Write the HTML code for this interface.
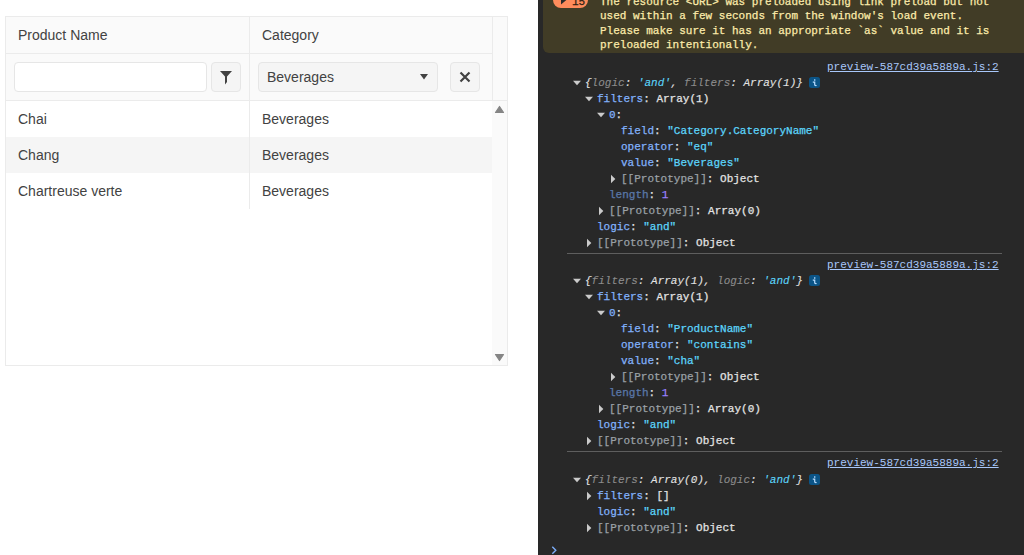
<!DOCTYPE html>
<html><head><meta charset="utf-8">
<style>
*{box-sizing:border-box;margin:0;padding:0}
html,body{width:1024px;height:555px;overflow:hidden;background:#fff}
body{position:relative;font-family:"Liberation Sans",sans-serif}
.abs{position:absolute}
/* grid */
#grid{position:absolute;left:5px;top:16px;width:503px;height:350px;border:1px solid #ebebeb;background:#fff}
.hdr{position:absolute;left:0;top:0;width:501px;height:84px;background:#fafafa}
.hline{position:absolute;height:1px;background:#ebebeb}
.vline{position:absolute;width:1px;background:#ebebeb}
.txt{position:absolute;font-size:14px;color:#424242;white-space:nowrap;line-height:16px}
.inp{position:absolute;background:#fff;border:1px solid #e6e6e6;border-radius:4px}
.btn{position:absolute;background:#f5f5f5;border:1px solid #e6e6e6;border-radius:4px}
/* console */
#con{position:absolute;left:538px;top:0;width:486px;height:555px;background:#282828;font-family:"Liberation Mono",monospace;font-size:11px}
#warn{position:absolute;left:5px;top:-10px;width:481px;height:63px;background:#413c26;border-radius:0 0 0 6px}
.wl{position:absolute;left:62px;color:#fcebaa;-webkit-text-stroke:0.25px currentColor;white-space:pre;line-height:14px}
.cl{position:absolute;white-space:pre;line-height:16px;color:#e3e3e3;-webkit-text-stroke:0.25px}
.tri{position:absolute;width:0;height:0}
.td{border-left:4px solid transparent;border-right:4px solid transparent;border-top:5px solid #c4c4c4}
.tr{border-top:4px solid transparent;border-bottom:4px solid transparent;border-left:5px solid #c4c4c4}
.k{color:#82b2fc}
.s{color:#5cd5fb}
.n{color:#9980ff}
.g{color:#9aa0a6}
.w{color:#e3e3e3}
.i{font-style:italic;-webkit-text-stroke:0.1px}
.i .g{color:#8c8c8c}
.lnk{position:absolute;left:289px;color:#a8c7fa;text-decoration:underline;line-height:16px}
.sep{position:absolute;left:29px;width:435px;height:1px;background:#5e5e5e}
.badge{position:absolute;left:15px;top:-9px;width:35px;height:17px;background:#fe8c5c;border-radius:8px}
.kd{color:#7cacf8;opacity:.6}
.info{position:absolute;width:11px;height:11px;background:#0e4c7c;border-radius:2px;color:#c2e7ff;font-size:10px;font-weight:bold;line-height:11px;text-align:center;font-family:"Liberation Sans",sans-serif}
</style></head><body>
<div id="grid">
  <div class="hdr"></div>
  <div class="abs" style="left:0;top:120px;width:486px;height:36px;background:#f5f5f5"></div>
  <div class="hline" style="left:0;top:36px;width:486px"></div>
  <div class="hline" style="left:0;top:83px;width:501px"></div>
  <div class="vline" style="left:243px;top:0;height:192px"></div>
  <div class="vline" style="left:486px;top:0;height:83px"></div>
  <div class="txt" style="left:12px;top:10px">Product Name</div>
  <div class="txt" style="left:256px;top:10px">Category</div>
  <div class="inp" style="left:8px;top:45px;width:193px;height:30px"></div>
  <div class="btn" style="left:205px;top:45px;width:30px;height:30px"></div>
  <svg class="abs" style="left:213px;top:53px" width="14" height="15" viewBox="0 0 14 15"><path d="M1 1 L13 1 L8 6.5 L8 12 L6 14.5 L6 6.5 Z" fill="#424242"/></svg>
  <div class="btn" style="left:252px;top:45px;width:180px;height:30px"></div>
  <div class="txt" style="left:261px;top:52px">Beverages</div>
  <svg class="abs" style="left:413px;top:56px" width="10" height="8" viewBox="0 0 10 8"><path d="M1 1 L9 1 L5 6.6 Z" fill="#424242"/></svg>
  <div class="btn" style="left:444px;top:45px;width:30px;height:30px"></div>
  <svg class="abs" style="left:453px;top:54px" width="12" height="12" viewBox="0 0 12 12"><path d="M1.5 1.5 L10.5 10.5 M10.5 1.5 L1.5 10.5" stroke="#424242" stroke-width="2.2"/></svg>
  <div class="txt" style="left:12px;top:94px">Chai</div>
  <div class="txt" style="left:256px;top:94px">Beverages</div>
  <div class="txt" style="left:12px;top:130px">Chang</div>
  <div class="txt" style="left:256px;top:130px">Beverages</div>
  <div class="txt" style="left:12px;top:166px">Chartreuse verte</div>
  <div class="txt" style="left:256px;top:166px">Beverages</div>
  <div class="abs" style="left:486px;top:84px;width:15px;height:264px;background:#fafafa"></div>
  <svg class="abs" style="left:488px;top:88px" width="11" height="9" viewBox="0 0 11 9"><path d="M5.5 1.5 L9.5 7.5 L1.5 7.5 Z" fill="#858585" stroke="#858585" stroke-width="1.2" stroke-linejoin="round"/></svg>
  <svg class="abs" style="left:488px;top:336px" width="11" height="9" viewBox="0 0 11 9"><path d="M1.5 1.5 L9.5 1.5 L5.5 7.5 Z" fill="#858585" stroke="#858585" stroke-width="1.2" stroke-linejoin="round"/></svg>
</div>
<div id="con">
  <div id="warn"></div>
  <div class="badge"></div>
  <svg class="abs" style="left:22px;top:-5px" width="10" height="12" viewBox="0 0 10 12"><path d="M1 0 L7 4.5 L1 9.5 Z" fill="#2b2b2b"/></svg>
  <div class="wl bt" style="left:34px;top:-5px;color:#2b1d12">15</div>
  <div class="wl" style="top:-5px">The resource &lt;URL&gt; was preloaded using link preload but not</div>
  <div class="wl" style="top:9px">used within a few seconds from the window's load event.</div>
  <div class="wl" style="top:24px">Please make sure it has an appropriate `as` value and it is</div>
  <div class="wl" style="top:38px">preloaded intentionally.</div>
<div class="lnk" style="top:59px">preview-587cd39a5889a.js:2</div>
<svg class="abs" style="left:35px;top:80px" width="8" height="6" viewBox="0 0 8 6"><path d="M0 0.8 L8 0.8 L4 5.2 Z" fill="#cbcbcb"/></svg>
<div class="cl" style="left:47px;top:75px"><span class="i">{<span class="g">logic</span>: <span class="s">'and'</span>, <span class="g">filters</span>: Array(1)}</span></div>
<svg class="abs" style="left:271px;top:77px" width="11" height="11" viewBox="0 0 11 11"><rect x="0" y="0" width="11" height="11" rx="2.5" fill="#0b5487"/><rect x="5" y="2.3" width="1.4" height="1.4" fill="#b8dcff"/><path d="M3.8 5.2 H5.7 V7.8 Q5.7 8.7 7.6 8.5" fill="none" stroke="#b8dcff" stroke-width="1.2"/></svg>
<svg class="abs" style="left:47px;top:96px" width="8" height="6" viewBox="0 0 8 6"><path d="M0 0.8 L8 0.8 L4 5.2 Z" fill="#cbcbcb"/></svg>
<div class="cl" style="left:59px;top:91px"><span class="k">filters</span>: Array(1)</div>
<svg class="abs" style="left:59px;top:112px" width="8" height="6" viewBox="0 0 8 6"><path d="M0 0.8 L8 0.8 L4 5.2 Z" fill="#cbcbcb"/></svg>
<div class="cl" style="left:71px;top:107px"><span class="k">0</span>:</div>
<div class="cl" style="left:83px;top:123px"><span class="k">field</span>: <span class="s">"Category.CategoryName"</span></div>
<div class="cl" style="left:83px;top:139px"><span class="k">operator</span>: <span class="s">"eq"</span></div>
<div class="cl" style="left:83px;top:155px"><span class="k">value</span>: <span class="s">"Beverages"</span></div>
<svg class="abs" style="left:72px;top:174px" width="6" height="10" viewBox="0 0 6 10"><path d="M1 0.8 L5.3 5 L1 9.2 Z" fill="#cbcbcb"/></svg>
<div class="cl" style="left:83px;top:171px"><span class="g">[[Prototype]]</span>: Object</div>
<div class="cl" style="left:71px;top:187px"><span class="kd">length</span>: <span class="n">1</span></div>
<svg class="abs" style="left:60px;top:206px" width="6" height="10" viewBox="0 0 6 10"><path d="M1 0.8 L5.3 5 L1 9.2 Z" fill="#cbcbcb"/></svg>
<div class="cl" style="left:71px;top:203px"><span class="g">[[Prototype]]</span>: Array(0)</div>
<div class="cl" style="left:59px;top:219px"><span class="k">logic</span>: <span class="s">"and"</span></div>
<svg class="abs" style="left:48px;top:238px" width="6" height="10" viewBox="0 0 6 10"><path d="M1 0.8 L5.3 5 L1 9.2 Z" fill="#cbcbcb"/></svg>
<div class="cl" style="left:59px;top:235px"><span class="g">[[Prototype]]</span>: Object</div>
<div class="sep" style="top:253px"></div>
<div class="lnk" style="top:257px">preview-587cd39a5889a.js:2</div>
<svg class="abs" style="left:35px;top:278px" width="8" height="6" viewBox="0 0 8 6"><path d="M0 0.8 L8 0.8 L4 5.2 Z" fill="#cbcbcb"/></svg>
<div class="cl" style="left:47px;top:273px"><span class="i">{<span class="g">filters</span>: Array(1), <span class="g">logic</span>: <span class="s">'and'</span>}</span></div>
<svg class="abs" style="left:271px;top:275px" width="11" height="11" viewBox="0 0 11 11"><rect x="0" y="0" width="11" height="11" rx="2.5" fill="#0b5487"/><rect x="5" y="2.3" width="1.4" height="1.4" fill="#b8dcff"/><path d="M3.8 5.2 H5.7 V7.8 Q5.7 8.7 7.6 8.5" fill="none" stroke="#b8dcff" stroke-width="1.2"/></svg>
<svg class="abs" style="left:47px;top:294px" width="8" height="6" viewBox="0 0 8 6"><path d="M0 0.8 L8 0.8 L4 5.2 Z" fill="#cbcbcb"/></svg>
<div class="cl" style="left:59px;top:289px"><span class="k">filters</span>: Array(1)</div>
<svg class="abs" style="left:59px;top:310px" width="8" height="6" viewBox="0 0 8 6"><path d="M0 0.8 L8 0.8 L4 5.2 Z" fill="#cbcbcb"/></svg>
<div class="cl" style="left:71px;top:305px"><span class="k">0</span>:</div>
<div class="cl" style="left:83px;top:321px"><span class="k">field</span>: <span class="s">"ProductName"</span></div>
<div class="cl" style="left:83px;top:337px"><span class="k">operator</span>: <span class="s">"contains"</span></div>
<div class="cl" style="left:83px;top:353px"><span class="k">value</span>: <span class="s">"cha"</span></div>
<svg class="abs" style="left:72px;top:372px" width="6" height="10" viewBox="0 0 6 10"><path d="M1 0.8 L5.3 5 L1 9.2 Z" fill="#cbcbcb"/></svg>
<div class="cl" style="left:83px;top:369px"><span class="g">[[Prototype]]</span>: Object</div>
<div class="cl" style="left:71px;top:385px"><span class="kd">length</span>: <span class="n">1</span></div>
<svg class="abs" style="left:60px;top:404px" width="6" height="10" viewBox="0 0 6 10"><path d="M1 0.8 L5.3 5 L1 9.2 Z" fill="#cbcbcb"/></svg>
<div class="cl" style="left:71px;top:401px"><span class="g">[[Prototype]]</span>: Array(0)</div>
<div class="cl" style="left:59px;top:417px"><span class="k">logic</span>: <span class="s">"and"</span></div>
<svg class="abs" style="left:48px;top:436px" width="6" height="10" viewBox="0 0 6 10"><path d="M1 0.8 L5.3 5 L1 9.2 Z" fill="#cbcbcb"/></svg>
<div class="cl" style="left:59px;top:433px"><span class="g">[[Prototype]]</span>: Object</div>
<div class="sep" style="top:451px"></div>
<div class="lnk" style="top:455px">preview-587cd39a5889a.js:2</div>
<svg class="abs" style="left:35px;top:477px" width="8" height="6" viewBox="0 0 8 6"><path d="M0 0.8 L8 0.8 L4 5.2 Z" fill="#cbcbcb"/></svg>
<div class="cl" style="left:47px;top:472px"><span class="i">{<span class="g">filters</span>: Array(0), <span class="g">logic</span>: <span class="s">'and'</span>}</span></div>
<svg class="abs" style="left:271px;top:474px" width="11" height="11" viewBox="0 0 11 11"><rect x="0" y="0" width="11" height="11" rx="2.5" fill="#0b5487"/><rect x="5" y="2.3" width="1.4" height="1.4" fill="#b8dcff"/><path d="M3.8 5.2 H5.7 V7.8 Q5.7 8.7 7.6 8.5" fill="none" stroke="#b8dcff" stroke-width="1.2"/></svg>
<svg class="abs" style="left:48px;top:491px" width="6" height="10" viewBox="0 0 6 10"><path d="M1 0.8 L5.3 5 L1 9.2 Z" fill="#cbcbcb"/></svg>
<div class="cl" style="left:59px;top:488px"><span class="k">filters</span>: []</div>
<div class="cl" style="left:59px;top:504px"><span class="k">logic</span>: <span class="s">"and"</span></div>
<svg class="abs" style="left:48px;top:523px" width="6" height="10" viewBox="0 0 6 10"><path d="M1 0.8 L5.3 5 L1 9.2 Z" fill="#cbcbcb"/></svg>
<div class="cl" style="left:59px;top:520px"><span class="g">[[Prototype]]</span>: Object</div>
<svg class="abs" style="left:13px;top:546px" width="8" height="10" viewBox="0 0 8 10"><path d="M1.3 0.7 L4.8 4.2 L1.3 7.7" fill="none" stroke="#7cacf8" stroke-width="1.4"/></svg>
</div>
</body></html>
